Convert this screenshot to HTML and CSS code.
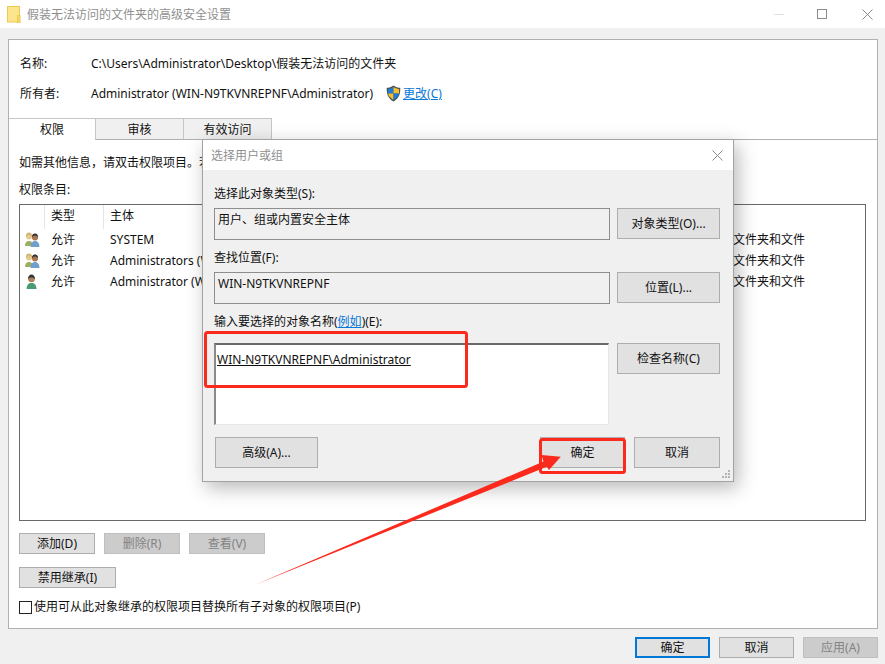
FILE: index.html
```html
<!DOCTYPE html>
<html lang="zh-CN">
<head>
<meta charset="utf-8">
<title>假装无法访问的文件夹的高级安全设置</title>
<link rel="stylesheet" href="styles.css">
</head>
<body>
<svg class="defs" width="0" height="0" aria-hidden="true">
  <defs>
    <symbol id="ico-group" viewBox="0 0 16 15">
      <path d="M1 14c0-3 1.500-4.500 3-5h2c1.500.5 3 1.500 3 5z" fill="#9fae62"/>
      <circle cx="5" cy="4.500" r="3" fill="#e6c893"/>
      <path d="M2 5c-.5-3 1-4.500 3-4.500S8.500 2 8 5C7.500 3.500 6.500 3 5 3S2.500 3.500 2 5z" fill="#cdb877"/>
      <path d="M6.500 15c0-3.500 1.500-5.500 3.500-6h2c2 .5 3.500 2.500 3.500 6z" fill="#6f9fcb"/>
      <circle cx="11" cy="5.500" r="3" fill="#a9764f"/>
      <path d="M8 5.500C7.800 3 9 1.500 11 1.500S14.200 3 14 5.500C13.300 4 12 3.500 11 3.500S8.700 4 8 5.500z" fill="#33302c"/>
    </symbol>
    <symbol id="ico-user" viewBox="0 0 16 15">
      <path d="M2.500 15c0-3.500 1.700-5.500 3.500-6h3c2 .5 3.500 2.500 3.500 6z" fill="#4b9b72"/>
      <circle cx="7.500" cy="5" r="3.300" fill="#b0805a"/>
      <path d="M4 5.500C3.800 2.500 5.500.5 7.500.5S11.200 2.500 11 5.500C10.300 4 9 3.500 7.500 3.500S4.700 4 4 5.500z" fill="#2f3532"/>
    </symbol>
  </defs>
</svg>

<div class="window">
  <header class="titlebar">
    <svg class="folder" width="14" height="17" viewBox="0 0 14 17" aria-hidden="true">
      <rect x=".5" y=".5" width="12" height="15.500" fill="#fde58e" stroke="#ecc94f"/>
      <rect x="10.500" y="9.500" width="2.500" height="7" fill="#f7d76f" stroke="#ecc94f"/>
    </svg>
    <span class="title-text">假装无法访问的文件夹的高级安全设置</span>
    <div class="win-controls">
      <span class="ctl ctl-min"></span>
      <span class="ctl ctl-max"></span>
      <svg class="ctl-close" width="11" height="11" viewBox="0 0 11 11" aria-hidden="true"><path d="M.5.500l10 10M10.500.500l-10 10" stroke="#8a8a8a" fill="none"/></svg>
    </div>
  </header>

  <main class="content">
    <section class="panel">
      <div class="info">
        <div class="info-row info-name"><span class="info-label">名称:</span><span>C:\Users\Administrator\Desktop\假装无法访问的文件夹</span></div>
        <div class="info-row info-owner">
          <span class="info-label">所有者:</span><span>Administrator (WIN-N9TKVNREPNF\Administrator)</span>
          <svg class="shield" width="15" height="17" viewBox="0 0 15 17" aria-hidden="true">
            <path d="M7.500.500C5.500 2 3 2.800.7 2.800c0 6 1 10.500 6.800 13.700 5.800-3.200 6.800-7.700 6.800-13.700C12 2.800 9.500 2 7.500.500z" fill="#4a4f55"/>
            <path d="M7.500 2v6.500H2c-.1-1.500-.1-3-.1-4.500C4 3.800 5.800 3.200 7.500 2z" fill="#1c7fd6"/>
            <path d="M7.500 2c1.700 1.200 3.500 1.800 5.600 2 0 1.500 0 3-.1 4.500H7.500z" fill="#f6bd2c"/>
            <path d="M2 8.500h5.500v6.400C4 12.800 2.500 11 2 8.500z" fill="#f6bd2c"/>
            <path d="M7.500 8.500H13c-.5 2.500-2 4.300-5.500 6.400z" fill="#1c7fd6"/>
          </svg>
          <a class="link change-link">更改(C)</a>
        </div>
      </div>
      <nav class="tabs">
        <span class="tab tab-active">权限</span>
        <span class="tab">审核</span>
        <span class="tab">有效访问</span>
      </nav>
      <div class="tab-body">
        <p class="hint">如需其他信息，请双击权限项目。若要修改权限项目，请选择该项目并单击“编辑”(如果可用)。</p>
        <p class="entries-label">权限条目:</p>
        <div class="list">
          <div class="list-head">
            <span class="col-icon"></span>
            <span class="col-type">类型</span>
            <span class="col-main">主体</span>
          </div>
          <div class="list-row">
            <span class="col-icon"><svg class="row-ico" width="16" height="15"><use href="#ico-group"/></svg></span>
            <span class="col-type">允许</span><span class="col-main">SYSTEM</span><span class="col-apply">文件夹和文件</span>
          </div>
          <div class="list-row">
            <span class="col-icon"><svg class="row-ico" width="16" height="15"><use href="#ico-group"/></svg></span>
            <span class="col-type">允许</span><span class="col-main">Administrators (WIN</span><span class="col-apply">文件夹和文件</span>
          </div>
          <div class="list-row">
            <span class="col-icon"><svg class="row-ico" width="16" height="15"><use href="#ico-user"/></svg></span>
            <span class="col-type">允许</span><span class="col-main">Administrator (WIN</span><span class="col-apply">文件夹和文件</span>
          </div>
        </div>
        <div class="btn-row">
          <button class="btn btn-add">添加(D)</button>
          <button class="btn btn-off btn-del">删除(R)</button>
          <button class="btn btn-off btn-view">查看(V)</button>
        </div>
        <button class="btn btn-inherit">禁用继承(I)</button>
        <label class="check-row"><span class="checkbox"></span><span>使用可从此对象继承的权限项目替换所有子对象的权限项目(P)</span></label>
      </div>
    </section>
    <footer class="actions">
      <button class="btn btn-primary">确定</button>
      <button class="btn btn-act">取消</button>
      <button class="btn btn-off btn-act">应用(A)</button>
    </footer>
  </main>

  <section class="dialog">
    <header class="dlg-title">
      <span class="dlg-title-text">选择用户或组</span>
      <svg width="11" height="11" viewBox="0 0 11 11" aria-hidden="true"><path d="M.5.500l10 10M10.500.500l-10 10" stroke="#8a8a8a" fill="none"/></svg>
    </header>
    <div class="dlg-body">
      <p class="dlg-label lab-first">选择此对象类型(S):</p>
      <div class="dlg-line">
        <div class="field">用户、组或内置安全主体</div>
        <button class="btn btn-side">对象类型(O)...</button>
      </div>
      <p class="dlg-label lab-second">查找位置(F):</p>
      <div class="dlg-line">
        <div class="field">WIN-N9TKVNREPNF</div>
        <button class="btn btn-side">位置(L)...</button>
      </div>
      <p class="dlg-label lab-third">输入要选择的对象名称(<a class="link">例如</a>)(E):</p>
      <div class="dlg-line dlg-line-input">
        <div class="input"><span class="typed">WIN-N9TKVNREPNF\Administrator</span></div>
        <button class="btn btn-side">检查名称(C)</button>
      </div>
      <div class="dlg-foot">
        <button class="btn btn-side btn-adv">高级(A)...</button>
        <button class="btn btn-ok">确定</button>
        <button class="btn btn-cancel">取消</button>
      </div>
    </div>
    <svg class="grip" width="9" height="9" viewBox="0 0 9 9" aria-hidden="true">
      <path d="M6 0h2v2H6zM3 3h2v2H3zM6 3h2v2H6zM0 6h2v2H0zM3 6h2v2H3zM6 6h2v2H6z" fill="#b4b4b4"/>
    </svg>
  </section>

  <svg class="annot" width="885" height="664" viewBox="0 0 885 664" aria-hidden="true">
    <rect x="205.500" y="332.500" width="261" height="54" rx="2" fill="none" stroke="#fc2a1c" stroke-width="3"/>
    <rect x="540.500" y="439.500" width="84" height="33" rx="2" fill="none" stroke="#fc2a1c" stroke-width="3"/>
    <path d="M254.500 585 L543.500 461.500 L541.500 455 L560.800 456.800 L549 470 L546.800 466.800 Z" fill="#fc2a1c"/>
  </svg>
</div>
</body>
</html>
```
FILE: styles.css
```css
* { box-sizing: border-box; }
html, body { margin: 0; padding: 0; }
body {
  width: 885px;
  height: 664px;
  overflow: hidden;
  background: #f0f0f0;
  color: #111;
  font: 12px/17px "Noto Sans", "Noto Sans CJK SC", sans-serif;
}
p { margin: 0; }
.defs { position: absolute; }
.window {
  position: relative;
  width: 885px;
  height: 664px;
  overflow: hidden;
  display: flex;
  flex-direction: column;
}

/* title bar */
.titlebar {
  flex: none;
  height: 28px;
  background: #fff;
  display: flex;
  align-items: center;
  padding-left: 7px;
}
.folder { flex: none; margin-right: 6px; }
.title-text { color: #8f8f8f; }
.win-controls {
  margin-left: auto;
  display: flex;
  align-items: center;
  padding-right: 12px;
}
.ctl-min { width: 10px; height: 1px; background: #e2e2e2; margin-right: 33px; }
.ctl-max { width: 10px; height: 10px; border: 1px solid #8a8a8a; margin-right: 35px; }

/* main window content */
.content {
  flex: 1;
  display: flex;
  flex-direction: column;
  padding: 11px 7px 0 8px;
}
.panel {
  height: 590px;
  background: #fff;
  border: 1px solid #b0b0b0;
  display: flex;
  flex-direction: column;
}
.info { height: 78px; padding: 15px 0 0 11px; }
.info-row { display: flex; align-items: center; height: 17px; }
.info-owner { margin-top: 13px; }
.info-label { width: 71px; flex: none; }
.shield { margin-left: 13px; flex: none; }
.change-link { margin-left: 2px; }
.link { color: #0a78d7; text-decoration: underline; }

.tabs {
  display: flex;
  height: 22px;
  border-bottom: 1px solid #b0b0b0;
}
.tab {
  width: 88px;
  height: 21px;
  background: #f0f0f0;
  border: 1px solid #c6c6c6;
  border-left: 0;
  border-bottom: 0;
  text-align: center;
  line-height: 21px;
}
.tab-active { background: #fff; height: 22px; width: 87px; }

.tab-body { flex: 1; padding: 14px 11px 0 10px; }
.hint { white-space: nowrap; height: 17px; overflow: hidden; }
.entries-label { margin-top: 10px; }
.list {
  margin-top: 6px;
  height: 317px;
  border: 1px solid #696969;
  overflow: hidden;
}
.list-head, .list-row { display: flex; white-space: nowrap; }
.list-head { height: 24px; align-items: center; margin-bottom: 0; }
.list-row { height: 21px; align-items: center; }
.col-icon { width: 25px; flex: none; display: flex; padding-left: 4px; }
.col-type { width: 59px; flex: none; padding-left: 6px; }
.col-main { width: 629px; flex: none; padding-left: 6px; }
.col-apply { flex: none; }
.list-head .col-icon, .list-head .col-type { height: 24px; border-right: 1px solid #e5e5e5; line-height: 22px; }
.list-head .col-main { height: 24px; line-height: 22px; }

.btn {
  margin: 0;
  padding: 0;
  font: inherit;
  color: #111;
  background: #e1e1e1;
  border: 1px solid #adadad;
  text-align: center;
  white-space: nowrap;
}
.btn-off { background: #ccc; border-color: #bfbfbf; color: #838383; }
.btn-row { display: flex; margin-top: 12px; }
.btn-add, .btn-del, .btn-view { height: 21px; width: 76px; }
.btn-add { margin-right: 9px; }
.btn-del { margin-right: 9px; }
.btn-inherit { display: block; height: 21px; width: 97px; margin-top: 13px; }
.check-row { display: flex; align-items: center; margin-top: 10px; }
.checkbox { width: 13px; height: 13px; border: 1px solid #222; background: #fff; margin-right: 2px; flex: none; margin-top: 1px; }

.actions {
  display: flex;
  justify-content: flex-end;
  gap: 9px;
  padding-top: 8px;
}
.btn-primary, .btn-act { width: 75px; height: 21px; }
.btn-primary { border: 2px solid #0078d7; }

/* dialog */
.dialog {
  position: absolute;
  left: 202px;
  top: 139px;
  width: 532px;
  height: 343px;
  background: #f0f0f0;
  border: 1px solid #a3a3a3;
  box-shadow: 4px 6px 18px rgba(0, 0, 0, .28);
  display: flex;
  flex-direction: column;
}
.dlg-title {
  flex: none;
  height: 30px;
  background: #fff;
  display: flex;
  align-items: center;
  justify-content: space-between;
  padding: 0 10px 0 8px;
}
.dlg-title-text { color: #8f8f8f; }
.dlg-body { flex: 1; padding: 15px 13px 0 11px; }
.lab-second { margin-top: 9px; }
.lab-third { margin-top: 9px; }
.dlg-line { display: flex; justify-content: space-between; margin-top: 6px; }
.field {
  width: 396px;
  height: 32px;
  border: 1px solid #8e8e8e;
  padding: 2px 3px;
}
.btn-side { width: 103px; height: 31px; align-self: flex-start; }
.dlg-line-input { margin-top: 13px; }
.input {
  width: 395px;
  height: 82px;
  background: #fff;
  border: 1px solid #e6e6e6;
  border-top: 2px solid #696969;
  border-left: 2px solid #8a8a8a;
  padding: 6px 1px;
}
.typed { text-decoration: underline; color: #111; }
.dlg-foot { display: flex; margin-top: 12px; padding-left: 1px; }
.btn-adv { margin-right: 222px; }
.btn-ok { width: 85px; height: 31px; margin-right: 9px; }
.btn-cancel { width: 86px; height: 31px; }
.grip { position: absolute; right: 2px; bottom: 2px; }

/* red annotations drawn over the screenshot */
.annot { position: absolute; left: 0; top: 0; pointer-events: none; }
```
